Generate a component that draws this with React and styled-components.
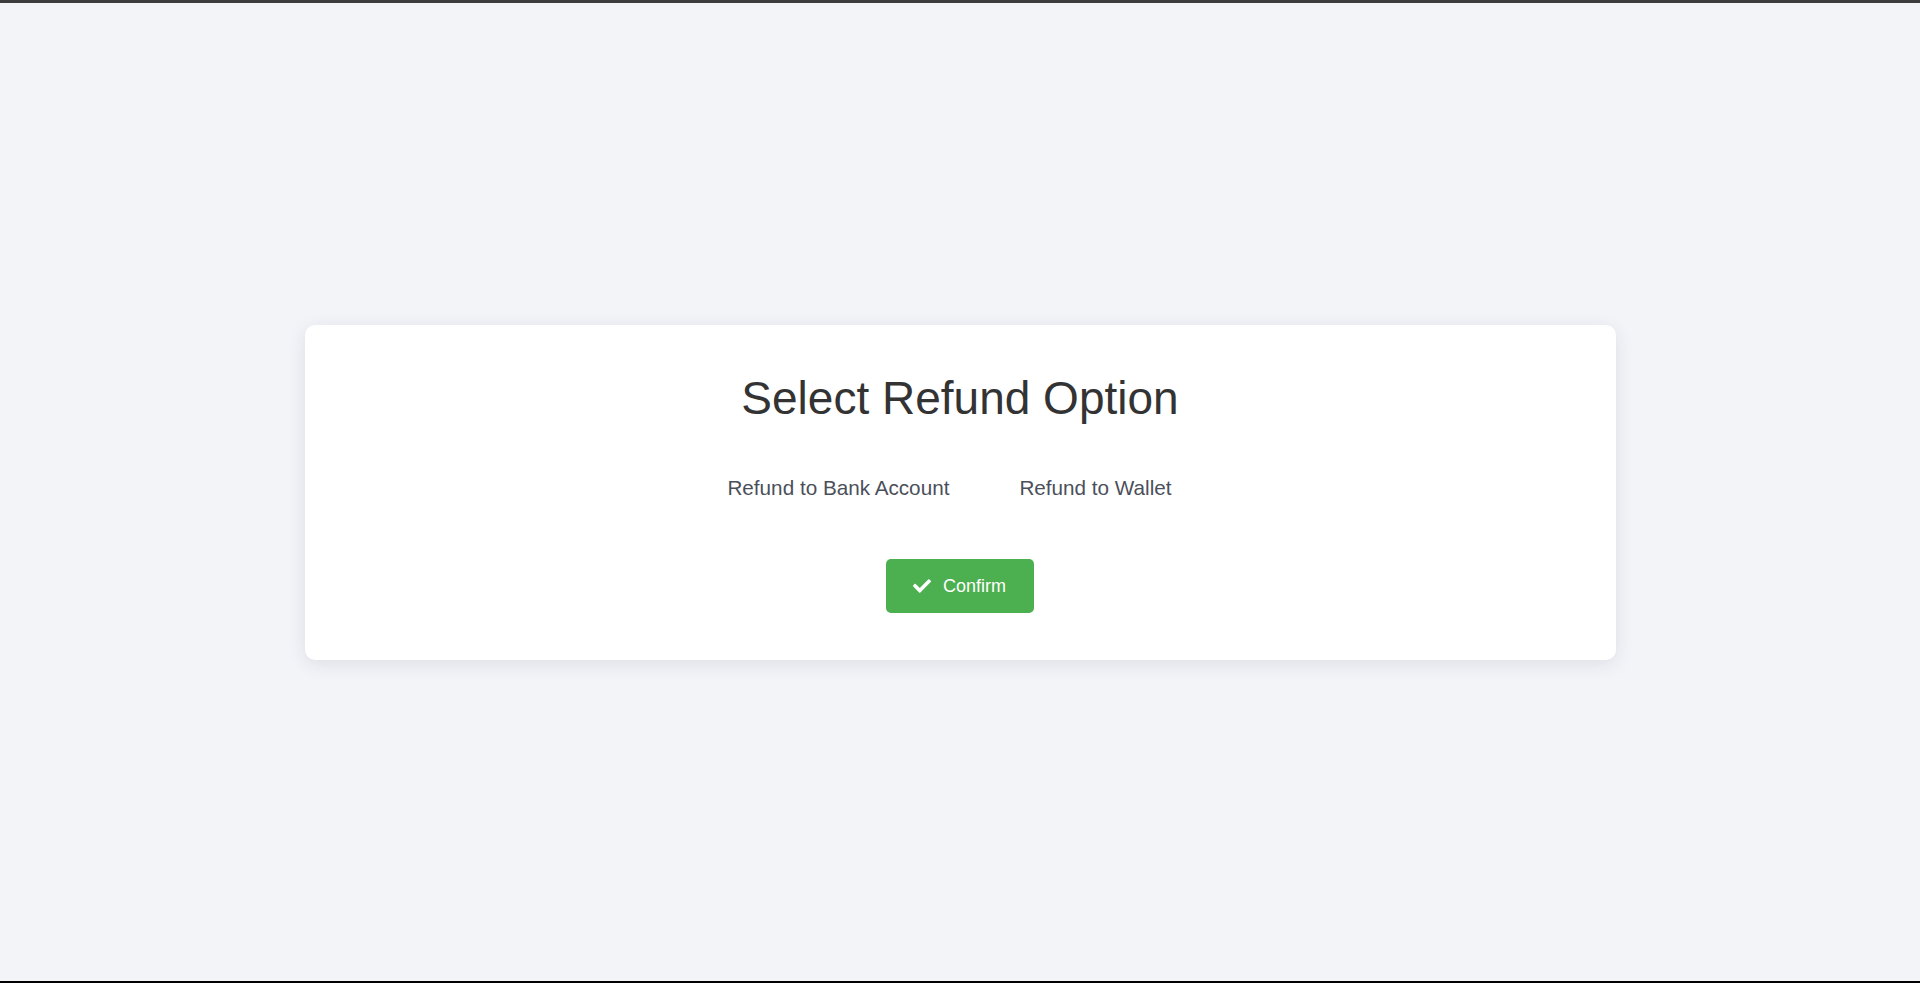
import React, { useState } from "react";
import styled, { createGlobalStyle } from "styled-components";
import { FaCheck } from "react-icons/fa";

const GlobalStyle = createGlobalStyle`
  * { box-sizing: border-box; }
  html, body { margin: 0; padding: 0; }
  body {
    background: #f3f4f8;
    font-family: Arial, "Liberation Sans", sans-serif;
  }
`;

const Page = styled.div`
  min-height: 983px;
  height: 100vh;
  display: flex;
  flex-direction: column;
  border-top: 3px solid #3c3c3c;
  border-bottom: 2px solid #000;
`;

const Stage = styled.main`
  flex: 1;
  display: flex;
  align-items: center;
  justify-content: center;
  padding-top: 1px;
`;

const Card = styled.section`
  width: 1311px;
  background: #ffffff;
  border-radius: 10px;
  box-shadow: 0 4px 18px rgba(30, 35, 60, 0.1);
  padding: 47.5px 40px 47px;
  display: flex;
  flex-direction: column;
  align-items: center;
`;

const Title = styled.h1`
  margin: 0;
  font-size: 46px;
  font-weight: 400;
  line-height: 1.15;
  color: #333333;
  text-align: center;
`;

const Options = styled.div`
  margin-top: 50.5px;
  display: flex;
  justify-content: center;
  gap: 70px;
  padding-right: 21px;
`;

const Option = styled.label`
  font-size: 20.7px;
  line-height: 1.15;
  color: ${(p) => (p.$active ? "#2f3440" : "#4b4f5a")};
  cursor: pointer;
`;

const HiddenRadio = styled.input`
  position: absolute;
  opacity: 0;
  width: 0;
  height: 0;
  pointer-events: none;
`;

const ConfirmButton = styled.button`
  margin-top: 59.5px;
  display: flex;
  align-items: center;
  gap: 12px;
  height: 54px;
  padding: 0 28px 0 27px;
  background: #4caf50;
  color: #ffffff;
  border: none;
  border-radius: 5px;
  font-family: Arial, "Liberation Sans", sans-serif;
  font-size: 18px;
  cursor: pointer;
  svg { display: block; }
`;

export default function App() {
  const [choice, setChoice] = useState("");
  const options = [
    { id: "bank", label: "Refund to Bank Account" },
    { id: "wallet", label: "Refund to Wallet" },
  ];
  return (
    <>
      <GlobalStyle />
      <Page>
        <Stage>
          <Card>
            <Title>Select Refund Option</Title>
            <Options>
              {options.map((o) => (
                <Option key={o.id} $active={choice === o.id}>
                  <HiddenRadio
                    type="radio"
                    name="refund"
                    value={o.id}
                    checked={choice === o.id}
                    onChange={() => setChoice(o.id)}
                  />
                  {o.label}
                </Option>
              ))}
            </Options>
            <ConfirmButton type="button">
              <FaCheck size={18} />
              Confirm
            </ConfirmButton>
          </Card>
        </Stage>
      </Page>
    </>
  );
}
